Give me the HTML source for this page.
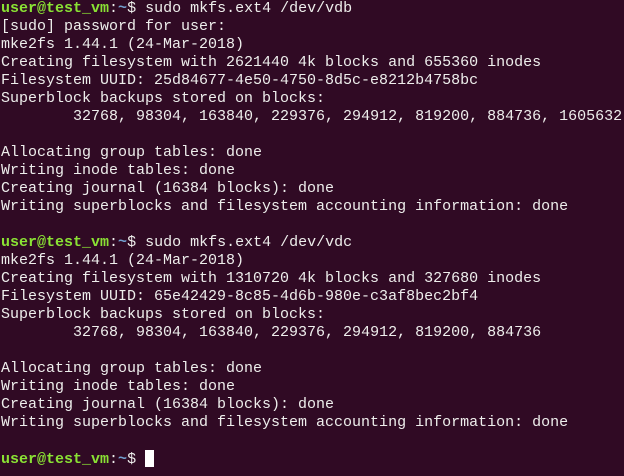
<!DOCTYPE html>
<html><head><style>
html,body{margin:0;padding:0;background:#300a24;width:624px;height:476px;overflow:hidden}
pre{margin:0;padding:0 0 0 1px;font-family:"Liberation Mono",monospace;font-size:15px;line-height:18px;color:#eeeeec;white-space:pre}
.g{color:#8ae234;font-weight:bold}.b{color:#729fcf;font-weight:bold}
.c{display:inline-block;width:9px;height:17px;background:#fff;vertical-align:-4px}
</style></head><body><pre><span class="g">user@test_vm</span>:<span class="b">~</span>$ sudo mkfs.ext4 /dev/vdb
[sudo] password for user: 
mke2fs 1.44.1 (24-Mar-2018)
Creating filesystem with 2621440 4k blocks and 655360 inodes
Filesystem UUID: 25d84677-4e50-4750-8d5c-e8212b4758bc
Superblock backups stored on blocks: 
	32768, 98304, 163840, 229376, 294912, 819200, 884736, 1605632

Allocating group tables: done                            
Writing inode tables: done                            
Creating journal (16384 blocks): done
Writing superblocks and filesystem accounting information: done   

<span class="g">user@test_vm</span>:<span class="b">~</span>$ sudo mkfs.ext4 /dev/vdc
mke2fs 1.44.1 (24-Mar-2018)
Creating filesystem with 1310720 4k blocks and 327680 inodes
Filesystem UUID: 65e42429-8c85-4d6b-980e-c3af8bec2bf4
Superblock backups stored on blocks: 
	32768, 98304, 163840, 229376, 294912, 819200, 884736

Allocating group tables: done                            
Writing inode tables: done                            
Creating journal (16384 blocks): done
Writing superblocks and filesystem accounting information: done 

<span class="g">user@test_vm</span>:<span class="b">~</span>$ <span class="c"></span></pre></body></html>
